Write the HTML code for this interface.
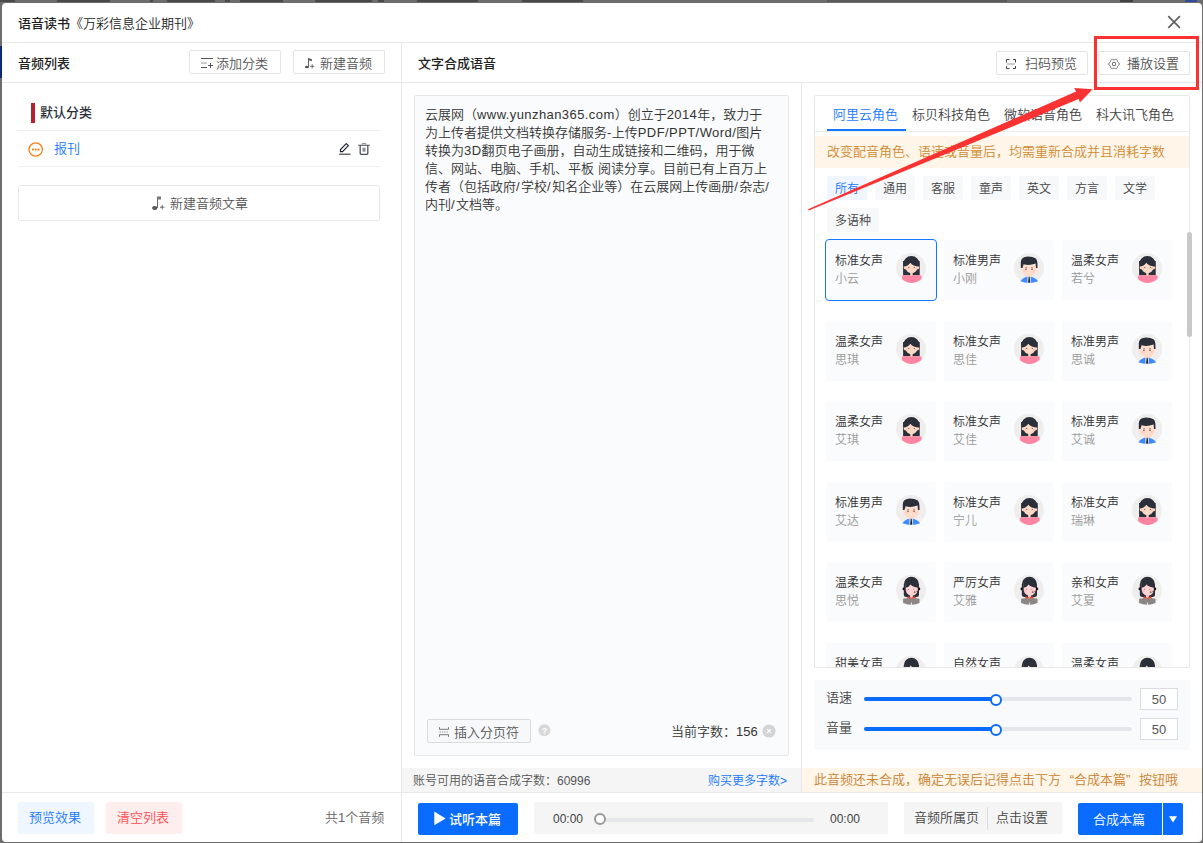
<!DOCTYPE html>
<html lang="zh-CN">
<head>
<meta charset="utf-8">
<title>语音读书</title>
<style>
*{box-sizing:border-box;margin:0;padding:0}
html,body{width:1203px;height:843px;overflow:hidden}
body{font-weight:350;background:#6d6d6d;font-family:"Liberation Sans","Noto Sans CJK SC",sans-serif;font-size:13px;color:#333;position:relative}
.abs{position:absolute}
.t{position:absolute;white-space:nowrap;line-height:20px;height:20px}
.b{font-weight:500}
#navy{left:0;top:46px;width:3px;height:32px;background:#0a2a6e}
.rm{position:absolute;top:0;height:2px;background:#262626;opacity:.5}
#modal{left:2px;top:3px;width:1200px;height:839px;background:#fff;border-radius:4px;overflow:hidden}
.hl{position:absolute;height:1px;background:#e8e8e8}
.vl{position:absolute;width:1px;background:#e8e8e8}
.btn{position:absolute;border:1px solid #e3e3e3;border-radius:2px;background:#fff;color:#555}
.chip{position:absolute;height:24px;line-height:26px;overflow:hidden;border-radius:2px;background:#f7f8fa;color:#444;font-size:12px;text-align:center;top:175px;width:40px}
.card{position:absolute;width:110px;height:60px;background:#fafbfc;border-radius:3px;overflow:hidden}
.card .n1{position:absolute;left:9px;top:12px;line-height:18px;font-size:12px;color:#333;white-space:nowrap}
.card .n2{position:absolute;left:9px;top:30px;line-height:18px;font-size:12px;color:#999;white-space:nowrap}
.card svg{position:absolute;left:69.4px;top:11.5px;width:32px;height:32px}
#ta .la{letter-spacing:.42px}
#L5 .la,#L6 .la{letter-spacing:1.45px!important}
.card.sel{left:825px!important;top:239px!important;width:112px;height:62px;border:1px solid #1677ff;border-radius:4px;background:#fafbfc}
.card.sel .n1{left:9px;top:12px}.card.sel .n2{left:9px;top:30px}.card.sel svg{left:69.4px;top:11.5px}
.q{display:inline-block;width:13px}
</style>
</head>
<body>
<div class="abs" id="navy"></div>
<div class="rm" style="left:0px;width:15px"></div><div class="rm" style="left:57px;width:53px"></div><div class="rm" style="left:150px;width:3px"></div><div class="rm" style="left:167px;width:48px"></div><div class="rm" style="left:225px;width:5px"></div><div class="rm" style="left:240px;width:43px"></div><div class="rm" style="left:315px;width:57px"></div><div class="rm" style="left:378px;width:6px"></div><div class="rm" style="left:417px;width:61px"></div><div class="rm" style="left:522px;width:61px"></div><div class="rm" style="left:827px;width:180px;opacity:.25"></div><div class="rm" style="left:1120px;width:13px;opacity:.6"></div><div class="rm" style="left:1185px;width:12px;background:#1a3fae;opacity:.7"></div>
<div class="abs" id="modal">
<!-- coordinates inside modal are page coords minus (2,3) -->
<div id="in" class="abs" style="left:-2px;top:-3px;width:1203px;height:843px">

<!-- header -->
<div class="t" style="left:18px;top:14px;font-size:13px;color:#222"><span class="b">语音读书</span>《万彩信息企业期刊》</div>
<svg class="abs" style="left:1167px;top:15px" width="15" height="15" viewBox="0 0 15 15"><path d="M1.3 1.2L12.9 12.8M12.9 1.2L1.3 12.8" stroke="#606060" stroke-width="1.7" fill="none"/></svg>
<div class="hl" style="left:2px;top:42px;width:1200px"></div>
<div class="hl" style="left:2px;top:82px;width:1200px"></div>
<div class="vl" style="left:401px;top:43px;height:800px"></div>
<div class="vl" style="left:801px;top:83px;height:710px"></div>
<div class="hl" style="left:2px;top:792px;width:1200px"></div>

<!-- left panel -->
<div class="t b" style="left:18px;top:54px;color:#222">音频列表</div>
<div class="btn" style="left:189px;top:50px;width:92px;height:24px"></div>
<svg class="abs" style="left:200px;top:56px" width="14" height="13" viewBox="0 0 14 13"><path d="M1 2.5H13M1 11.5H7M8 9.5H13M10.5 7V12" stroke="#555" stroke-width="1" fill="none"/><path d="M1 7H7" stroke="#999" stroke-width="1.2" fill="none"/></svg>
<div class="t" style="left:216px;top:54px;color:#555">添加分类</div>
<div class="btn" style="left:293px;top:50px;width:92px;height:24px"></div>
<svg class="abs" style="left:304px;top:57px" width="12" height="12" viewBox="0 0 12 12"><ellipse cx="2.9" cy="10" rx="2" ry="1.35" fill="#555"/><path d="M4.5 10V1.2" stroke="#666" stroke-width="1" fill="none"/><path d="M4.2 1L7.9 2.2V4.2L4.2 3Z" fill="#555"/><path d="M6.2 9.3H10.2M8.2 7.3V11.3" stroke="#666" stroke-width="1" fill="none"/></svg>
<div class="t" style="left:320px;top:54px;color:#555">新建音频</div>

<div class="abs" style="left:31px;top:103px;width:4px;height:20px;background:#b5202e"></div>
<div class="t b" style="left:40px;top:103px;color:#2a2f3a">默认分类</div>
<div class="hl" style="left:18px;top:130px;width:362px;background:#ececec"></div>
<svg class="abs" style="left:28px;top:142px" width="16" height="16" viewBox="0 0 16 16"><circle cx="7.7" cy="7.5" r="6.7" fill="none" stroke="#fa7d14" stroke-width="1.3"/><rect x="4" y="6.6" width="1.9" height="1.8" fill="#fa7d14"/><rect x="6.75" y="6.6" width="1.9" height="1.8" fill="#fa7d14"/><rect x="9.5" y="6.6" width="1.9" height="1.8" fill="#fa7d14"/></svg>
<div class="t" style="left:54px;top:139px;color:#1677ff">报刊</div>
<svg class="abs" style="left:339px;top:142px" width="13" height="14" viewBox="0 0 13 14"><path d="M7.2 1.6L9.4 3.6L3.6 9.6L1.6 9.6L1.4 7.6Z" fill="none" stroke="#1d222d" stroke-width="1.2" stroke-linejoin="round"/><path d="M0.2 12.3H11.6" stroke="#666b75" stroke-width="1.5"/></svg>
<svg class="abs" style="left:358px;top:142px" width="12" height="14" viewBox="0 0 12 14"><path d="M0.3 3.2H11.7" stroke="#3b414c" stroke-width="1.1"/><path d="M4.3 2.6V1.5H7.7V2.6" stroke="#8a8e96" stroke-width="1" fill="none"/><path d="M2.2 3.5V11.6Q2.2 12.4 3 12.4H9Q9.8 12.4 9.8 11.6V3.5" stroke="#4a505b" stroke-width="1.3" fill="none"/><rect x="4.5" y="5.7" width="3" height="4" fill="#8a8e96"/></svg>
<div class="hl" style="left:18px;top:166px;width:362px;background:#f0f0f0"></div>
<div class="btn" style="left:18px;top:185px;width:362px;height:36px;border-color:#e8e8e8"></div>
<svg class="abs" style="left:151px;top:195px" width="14" height="16" viewBox="0 0 14 16"><ellipse cx="3.7" cy="13" rx="2.6" ry="1.9" fill="#555"/><path d="M6.5 13V1.8" stroke="#666" stroke-width="1" fill="none"/><path d="M6 1.5H10V4.5H6Z" fill="#777"/><path d="M9 12.2H13.4M11.2 10V14.4" stroke="#666" stroke-width="1" fill="none"/></svg>
<div class="t" style="left:170px;top:194px;color:#555">新建音频文章</div>

<div class="abs" style="left:18px;top:802px;width:76px;height:32px;border-radius:3px;background:#f0f6ff"></div>
<div class="t" style="left:29px;top:808px;color:#1677ff">预览效果</div>
<div class="abs" style="left:106px;top:802px;width:76px;height:32px;border-radius:3px;background:#ffeeee"></div>
<div class="t" style="left:117px;top:808px;color:#ff4d4f">清空列表</div>
<div class="t" style="left:325px;top:808px;color:#666">共1个音频</div>

<!-- middle panel -->
<div class="t b" style="left:418px;top:54px;color:#222">文字合成语音</div>
<div class="abs" style="left:414px;top:95px;width:375px;height:661px;background:#fafbfc;border:1px solid #e6e6e6;border-radius:2px"></div>
<div class="abs" id="ta" style="left:425px;top:106px;font-size:13px;line-height:18px;color:#333;white-space:nowrap">
<div id="L1">云展网（<span class="la">www.yunzhan365.com</span>）创立于<span class="la">2014</span>年，致力于</div>
<div id="L2">为上传者提供文档转换存储服务<span class="la">-</span>上传<span class="la">PDF/PPT/Word/</span>图片</div>
<div id="L3">转换为<span class="la">3D</span>翻页电子画册，自动生成链接和二维码，用于微</div>
<div id="L4">信、网站、电脑、手机、平板<span class="la"> </span>阅读分享。目前已有上百万上</div>
<div id="L5">传者（包括政府<span class="la">/</span>学校<span class="la">/</span>知名企业等）在云展网上传画册<span class="la">/</span>杂志<span class="la">/</span></div>
<div id="L6">内刊<span class="la">/</span>文档等。</div>
</div>
<div class="abs" style="left:427px;top:719px;width:104px;height:24px;border:1px solid #dcdcdc;border-radius:2px;background:#f7f8fa"></div>
<svg class="abs" style="left:438px;top:726px" width="12" height="12" viewBox="0 0 12 12"><path d="M1.5 1.2V3.3H10.5V1.2M1.5 10.8V8.7H10.5V10.8" stroke="#777" stroke-width="1" fill="none" stroke-linejoin="round"/><path d="M1.5 6H10.5" stroke="#999" stroke-width="1" stroke-dasharray="1.4 0.9" fill="none"/></svg>
<div class="t" style="left:454px;top:723px;color:#555">插入分页符</div>
<svg class="abs" style="left:537.6px;top:723.6px" width="13" height="13" viewBox="0 0 13 13"><circle cx="6.4" cy="6.3" r="6" fill="#d8d8d8"/><text x="6.4" y="9.6" font-size="9" font-weight="bold" fill="#fff" text-anchor="middle" font-family="Liberation Sans,sans-serif">?</text></svg>
<div class="t" style="left:671px;top:722px;color:#333">当前字数：<span class="la">156</span></div>
<svg class="abs" style="left:762px;top:724px" width="14" height="14" viewBox="0 0 14 14"><circle cx="7" cy="7" r="6.6" fill="#d4d4d4"/><path d="M5.1 5.1L8.9 8.9M8.9 5.1L5.1 8.9" stroke="#fff" stroke-width="1.1"/></svg>
<div class="abs" style="left:402px;top:768px;width:399px;height:24px;background:#f5f5f5"></div>
<div class="t" style="left:413px;top:771px;font-size:12px;color:#555">账号可用的语音合成字数：<span class="la">60996</span></div>
<div class="t" style="left:708px;top:771px;font-size:12px;color:#1677ff">购买更多字数&gt;</div>

<div class="abs" style="left:418px;top:803px;width:100px;height:32px;border-radius:2px;background:#0a6cff"></div>
<svg class="abs" style="left:434px;top:811px" width="12" height="15" viewBox="0 0 12 15"><path d="M0.3 0.6L11.6 7.4L0.3 14.2Z" fill="#fff"/></svg>
<div class="t b" style="left:449px;top:810px;color:#fff">试听本篇</div>
<div class="abs" style="left:534px;top:802px;width:354px;height:32px;border-radius:2px;background:#f5f5f5"></div>
<div class="t" style="left:553px;top:809px;font-size:12px;color:#444"><span class="la">00:00</span></div>
<div class="abs" style="left:600px;top:818px;width:214px;height:4px;border-radius:2px;background:#e4e6ea"></div>
<div class="abs" style="left:594px;top:813px;width:12px;height:12px;border-radius:6px;border:2px solid #999;background:#fff"></div>
<div class="t" style="left:830px;top:809px;font-size:12px;color:#444"><span class="la">00:00</span></div>
<div class="abs" style="left:904px;top:802px;width:158px;height:32px;border-radius:2px;background:#f5f5f5"></div>
<div class="t" style="left:914px;top:808px;color:#444">音频所属页</div>
<div class="abs" style="left:987px;top:807px;width:1px;height:23px;background:#dcdcdc"></div>
<div class="t" style="left:996px;top:808px;color:#444">点击设置</div>
<div class="abs" style="left:1078px;top:803px;width:84px;height:32px;border-radius:2px 0 0 2px;background:#0a6cff"></div>
<div class="t" style="left:1093px;top:810px;color:#fff">合成本篇</div>
<div class="abs" style="left:1163px;top:803px;width:20px;height:32px;border-radius:0 2px 2px 0;background:#0a6cff"></div>
<svg class="abs" style="left:1169px;top:816px" width="8" height="7" viewBox="0 0 8 7"><path d="M0 0.3H8L4 6.5Z" fill="#fff"/></svg>

<!--RIGHT-START-->
<!-- right panel -->
<div class="btn" style="left:996px;top:51px;width:92px;height:24px"></div>
<svg class="abs" style="left:1005px;top:58px" width="12" height="12" viewBox="0 0 12 12"><path d="M1.5 4.5V1.5H4.5M8 1.5H10.5V4.5M1.5 8V10.5H4.5M8 10.5H10.5V8" stroke="#444" stroke-width="1" fill="none"/><path d="M2 6H10" stroke="#999" stroke-width="1.2"/></svg>
<div class="t" style="left:1025px;top:54px;color:#555">扫码预览</div>
<div class="btn" style="left:1098px;top:51px;width:92px;height:24px"></div>
<svg class="abs" style="left:1108px;top:58px" width="12" height="12" viewBox="0 0 12 12"><path d="M11.25 6.00L11.20 6.34L11.05 6.66L10.82 6.96L10.54 7.22L10.25 7.44L9.98 7.65L9.76 7.85L9.59 8.07L9.49 8.33L9.42 8.62L9.38 8.96L9.32 9.32L9.24 9.69L9.10 10.04L8.89 10.33L8.62 10.55L8.30 10.67L7.95 10.70L7.58 10.65L7.22 10.54L6.88 10.40L6.56 10.27L6.27 10.18L6.00 10.15L5.73 10.18L5.44 10.27L5.12 10.40L4.78 10.54L4.42 10.65L4.05 10.70L3.70 10.67L3.38 10.55L3.11 10.33L2.90 10.04L2.76 9.69L2.68 9.32L2.62 8.96L2.58 8.62L2.51 8.33L2.41 8.07L2.24 7.85L2.02 7.65L1.75 7.44L1.46 7.22L1.18 6.96L0.95 6.66L0.80 6.34L0.75 6.00L0.80 5.66L0.95 5.34L1.18 5.04L1.46 4.78L1.75 4.56L2.02 4.35L2.24 4.15L2.41 3.93L2.51 3.67L2.58 3.38L2.62 3.04L2.68 2.68L2.76 2.31L2.90 1.96L3.11 1.67L3.37 1.45L3.70 1.33L4.05 1.30L4.42 1.35L4.78 1.46L5.12 1.60L5.44 1.73L5.73 1.82L6.00 1.85L6.27 1.82L6.56 1.73L6.88 1.60L7.22 1.46L7.58 1.35L7.95 1.30L8.30 1.33L8.62 1.45L8.89 1.67L9.10 1.96L9.24 2.31L9.32 2.68L9.38 3.04L9.42 3.38L9.49 3.67L9.59 3.92L9.76 4.15L9.98 4.35L10.25 4.56L10.54 4.78L10.82 5.04L11.05 5.34L11.20 5.66Z" stroke="#666" stroke-width="1" fill="none" stroke-linejoin="round"/><circle cx="6" cy="6" r="1.75" stroke="#666" stroke-width="1" fill="none"/></svg>
<div class="t" style="left:1127px;top:54px;color:#555">播放设置</div>
<div class="abs" style="left:814px;top:95px;width:376px;height:573px;border:1px solid #e8e8e8;border-radius:2px;overflow:hidden" id="vb"><div class="abs" style="left:-815px;top:-96px;width:1203px;height:843px">
<div class="t" style="left:833px;top:105px;color:#1677ff">阿里云角色</div>
<div class="t" style="left:912px;top:105px;color:#444">标贝科技角色</div>
<div class="t" style="left:1004px;top:105px;color:#444">微软语音角色</div>
<div class="t" style="left:1096px;top:105px;color:#444">科大讯飞角色</div>
<div class="hl" style="left:815px;top:131px;width:375px;background:#ececec"></div>
<div class="abs" style="left:827px;top:129px;width:79px;height:2px;background:#1677ff"></div>
<div class="abs" style="left:815px;top:136px;width:375px;height:32px;background:#fff5e9"></div>
<div class="t" style="left:827px;top:142px;color:#d08a2e">改变配音角色、语速或音量后，均需重新合成并且消耗字数</div>
<div class="chip" style="left:827px;top:176px;background:#f0f6ff;color:#1677ff;">所有</div>
<div class="chip" style="left:875px;top:176px;">通用</div>
<div class="chip" style="left:923px;top:176px;">客服</div>
<div class="chip" style="left:971px;top:176px;">童声</div>
<div class="chip" style="left:1019px;top:176px;">英文</div>
<div class="chip" style="left:1067px;top:176px;">方言</div>
<div class="chip" style="left:1115px;top:176px;">文学</div>
<div class="chip" style="left:827px;top:208px;width:52px">多语种</div>
<div class="card sel" style="left:826px;top:240px"><div class="n1">标准女声</div><div class="n2">小云</div><svg viewBox="0 0 32 32"><circle cx="16" cy="16" r="15" fill="#f0eded"/><path d="M8.1 23.2V12.2a8.3 8.2 0 0 1 16.6 0V23.2Z" fill="#2a2f3a"/><rect x="15.3" y="20.6" width="2.3" height="3.8" fill="#ffd3bd"/><path d="M8.4 10.5H24.5V14.4Q24.4 17 22 17.6Q21 20.4 16.5 21.7Q12 20.4 11 17.6Q8.5 17 8.4 14.4Z" fill="#ffd9c7"/><path d="M8.1 14.7Q13.2 14.4 15.3 10.8Q17.6 14.2 24.7 14.7V9H8.1Z" fill="#2a2f3a"/><rect x="13" y="14.9" width="1.5" height="0.8" rx="0.4" fill="#4a3a3a"/><rect x="18.6" y="14.9" width="1.5" height="0.8" rx="0.4" fill="#4a3a3a"/><circle cx="12.3" cy="16.5" r="1" fill="#ffc4b3"/><circle cx="20.9" cy="16.5" r="1" fill="#ffc4b3"/><path d="M7 24.5Q7 23.3 8.2 23.3H15.3Q16.4 24.5 17.6 23.3H25.3Q26.5 23.3 26.5 24.5V27Q21.5 31 16.7 31Q11.5 31 7 27Z" fill="#ff85a3"/></svg></div>
<div class="card" style="left:944px;top:240px"><div class="n1">标准男声</div><div class="n2">小刚</div><svg viewBox="0 0 32 32"><circle cx="16" cy="16" r="15" fill="#f0eded"/><path d="M7.4 29.2Q11 24.6 16 24.3Q21 24.6 25.2 29.2Q21 31 16.3 31Q11.5 31 7.4 29.2Z" fill="#3d8bff"/><rect x="14.5" y="23" width="3.2" height="8" fill="#fff"/><rect x="14.5" y="22" width="3.2" height="3" fill="#ffd3bd"/><path d="M15.6 24.8h1.1l0.5 6h-2.1z" fill="#222"/><path d="M8.7 13H23.7V17.2Q23.7 21 20.6 23.2Q16.2 25.4 12 23.2Q8.7 21 8.7 17.2Z" fill="#ffdccb"/><path d="M7.8 16V10Q8 4.6 15 4.4Q20 4.4 22.8 6.6Q24.8 8.4 24.5 16L23 16L22.6 11.6Q16 14 10.6 12.2L9.5 16Z" fill="#2a2f3a"/><circle cx="13" cy="17.2" r="0.7" fill="#3a3038"/><circle cx="19" cy="17.2" r="0.7" fill="#3a3038"/><path d="M12 15.8L14 15.4M18 15.4L20 15.8" stroke="#5a4a4a" stroke-width="0.5"/><circle cx="11.4" cy="18.8" r="1" fill="#ffc9b8"/><circle cx="20.8" cy="18.8" r="1" fill="#ffc9b8"/></svg></div>
<div class="card" style="left:1062px;top:240px"><div class="n1">温柔女声</div><div class="n2">若兮</div><svg viewBox="0 0 32 32"><circle cx="16" cy="16" r="15" fill="#f0eded"/><path d="M8.1 23.2V12.2a8.3 8.2 0 0 1 16.6 0V23.2Z" fill="#2a2f3a"/><rect x="15.3" y="20.6" width="2.3" height="3.8" fill="#ffd3bd"/><path d="M8.4 10.5H24.5V14.4Q24.4 17 22 17.6Q21 20.4 16.5 21.7Q12 20.4 11 17.6Q8.5 17 8.4 14.4Z" fill="#ffd9c7"/><path d="M8.1 14.7Q13.2 14.4 15.3 10.8Q17.6 14.2 24.7 14.7V9H8.1Z" fill="#2a2f3a"/><rect x="13" y="14.9" width="1.5" height="0.8" rx="0.4" fill="#4a3a3a"/><rect x="18.6" y="14.9" width="1.5" height="0.8" rx="0.4" fill="#4a3a3a"/><circle cx="12.3" cy="16.5" r="1" fill="#ffc4b3"/><circle cx="20.9" cy="16.5" r="1" fill="#ffc4b3"/><path d="M7 24.5Q7 23.3 8.2 23.3H15.3Q16.4 24.5 17.6 23.3H25.3Q26.5 23.3 26.5 24.5V27Q21.5 31 16.7 31Q11.5 31 7 27Z" fill="#ff85a3"/></svg></div>
<div class="card" style="left:826px;top:321px"><div class="n1">温柔女声</div><div class="n2">思琪</div><svg viewBox="0 0 32 32"><circle cx="16" cy="16" r="15" fill="#f0eded"/><path d="M8.1 23.2V12.2a8.3 8.2 0 0 1 16.6 0V23.2Z" fill="#2a2f3a"/><rect x="15.3" y="20.6" width="2.3" height="3.8" fill="#ffd3bd"/><path d="M8.4 10.5H24.5V14.4Q24.4 17 22 17.6Q21 20.4 16.5 21.7Q12 20.4 11 17.6Q8.5 17 8.4 14.4Z" fill="#ffd9c7"/><path d="M8.1 14.7Q13.2 14.4 15.3 10.8Q17.6 14.2 24.7 14.7V9H8.1Z" fill="#2a2f3a"/><rect x="13" y="14.9" width="1.5" height="0.8" rx="0.4" fill="#4a3a3a"/><rect x="18.6" y="14.9" width="1.5" height="0.8" rx="0.4" fill="#4a3a3a"/><circle cx="12.3" cy="16.5" r="1" fill="#ffc4b3"/><circle cx="20.9" cy="16.5" r="1" fill="#ffc4b3"/><path d="M7 24.5Q7 23.3 8.2 23.3H15.3Q16.4 24.5 17.6 23.3H25.3Q26.5 23.3 26.5 24.5V27Q21.5 31 16.7 31Q11.5 31 7 27Z" fill="#ff85a3"/></svg></div>
<div class="card" style="left:944px;top:321px"><div class="n1">标准女声</div><div class="n2">思佳</div><svg viewBox="0 0 32 32"><circle cx="16" cy="16" r="15" fill="#f0eded"/><path d="M8.1 23.2V12.2a8.3 8.2 0 0 1 16.6 0V23.2Z" fill="#2a2f3a"/><rect x="15.3" y="20.6" width="2.3" height="3.8" fill="#ffd3bd"/><path d="M8.4 10.5H24.5V14.4Q24.4 17 22 17.6Q21 20.4 16.5 21.7Q12 20.4 11 17.6Q8.5 17 8.4 14.4Z" fill="#ffd9c7"/><path d="M8.1 14.7Q13.2 14.4 15.3 10.8Q17.6 14.2 24.7 14.7V9H8.1Z" fill="#2a2f3a"/><rect x="13" y="14.9" width="1.5" height="0.8" rx="0.4" fill="#4a3a3a"/><rect x="18.6" y="14.9" width="1.5" height="0.8" rx="0.4" fill="#4a3a3a"/><circle cx="12.3" cy="16.5" r="1" fill="#ffc4b3"/><circle cx="20.9" cy="16.5" r="1" fill="#ffc4b3"/><path d="M7 24.5Q7 23.3 8.2 23.3H15.3Q16.4 24.5 17.6 23.3H25.3Q26.5 23.3 26.5 24.5V27Q21.5 31 16.7 31Q11.5 31 7 27Z" fill="#ff85a3"/></svg></div>
<div class="card" style="left:1062px;top:321px"><div class="n1">标准男声</div><div class="n2">思诚</div><svg viewBox="0 0 32 32"><circle cx="16" cy="16" r="15" fill="#f0eded"/><path d="M7.4 29.2Q11 24.6 16 24.3Q21 24.6 25.2 29.2Q21 31 16.3 31Q11.5 31 7.4 29.2Z" fill="#3d8bff"/><rect x="14.5" y="23" width="3.2" height="8" fill="#fff"/><rect x="14.5" y="22" width="3.2" height="3" fill="#ffd3bd"/><path d="M15.6 24.8h1.1l0.5 6h-2.1z" fill="#222"/><path d="M8.7 13H23.7V17.2Q23.7 21 20.6 23.2Q16.2 25.4 12 23.2Q8.7 21 8.7 17.2Z" fill="#ffdccb"/><path d="M7.8 16V10Q8 4.6 15 4.4Q20 4.4 22.8 6.6Q24.8 8.4 24.5 16L23 16L22.6 11.6Q16 14 10.6 12.2L9.5 16Z" fill="#2a2f3a"/><circle cx="13" cy="17.2" r="0.7" fill="#3a3038"/><circle cx="19" cy="17.2" r="0.7" fill="#3a3038"/><path d="M12 15.8L14 15.4M18 15.4L20 15.8" stroke="#5a4a4a" stroke-width="0.5"/><circle cx="11.4" cy="18.8" r="1" fill="#ffc9b8"/><circle cx="20.8" cy="18.8" r="1" fill="#ffc9b8"/></svg></div>
<div class="card" style="left:826px;top:401px"><div class="n1">温柔女声</div><div class="n2">艾琪</div><svg viewBox="0 0 32 32"><circle cx="16" cy="16" r="15" fill="#f0eded"/><path d="M8.1 23.2V12.2a8.3 8.2 0 0 1 16.6 0V23.2Z" fill="#2a2f3a"/><rect x="15.3" y="20.6" width="2.3" height="3.8" fill="#ffd3bd"/><path d="M8.4 10.5H24.5V14.4Q24.4 17 22 17.6Q21 20.4 16.5 21.7Q12 20.4 11 17.6Q8.5 17 8.4 14.4Z" fill="#ffd9c7"/><path d="M8.1 14.7Q13.2 14.4 15.3 10.8Q17.6 14.2 24.7 14.7V9H8.1Z" fill="#2a2f3a"/><rect x="13" y="14.9" width="1.5" height="0.8" rx="0.4" fill="#4a3a3a"/><rect x="18.6" y="14.9" width="1.5" height="0.8" rx="0.4" fill="#4a3a3a"/><circle cx="12.3" cy="16.5" r="1" fill="#ffc4b3"/><circle cx="20.9" cy="16.5" r="1" fill="#ffc4b3"/><path d="M7 24.5Q7 23.3 8.2 23.3H15.3Q16.4 24.5 17.6 23.3H25.3Q26.5 23.3 26.5 24.5V27Q21.5 31 16.7 31Q11.5 31 7 27Z" fill="#ff85a3"/></svg></div>
<div class="card" style="left:944px;top:401px"><div class="n1">标准女声</div><div class="n2">艾佳</div><svg viewBox="0 0 32 32"><circle cx="16" cy="16" r="15" fill="#f0eded"/><path d="M8.1 23.2V12.2a8.3 8.2 0 0 1 16.6 0V23.2Z" fill="#2a2f3a"/><rect x="15.3" y="20.6" width="2.3" height="3.8" fill="#ffd3bd"/><path d="M8.4 10.5H24.5V14.4Q24.4 17 22 17.6Q21 20.4 16.5 21.7Q12 20.4 11 17.6Q8.5 17 8.4 14.4Z" fill="#ffd9c7"/><path d="M8.1 14.7Q13.2 14.4 15.3 10.8Q17.6 14.2 24.7 14.7V9H8.1Z" fill="#2a2f3a"/><rect x="13" y="14.9" width="1.5" height="0.8" rx="0.4" fill="#4a3a3a"/><rect x="18.6" y="14.9" width="1.5" height="0.8" rx="0.4" fill="#4a3a3a"/><circle cx="12.3" cy="16.5" r="1" fill="#ffc4b3"/><circle cx="20.9" cy="16.5" r="1" fill="#ffc4b3"/><path d="M7 24.5Q7 23.3 8.2 23.3H15.3Q16.4 24.5 17.6 23.3H25.3Q26.5 23.3 26.5 24.5V27Q21.5 31 16.7 31Q11.5 31 7 27Z" fill="#ff85a3"/></svg></div>
<div class="card" style="left:1062px;top:401px"><div class="n1">标准男声</div><div class="n2">艾诚</div><svg viewBox="0 0 32 32"><circle cx="16" cy="16" r="15" fill="#f0eded"/><path d="M7.4 29.2Q11 24.6 16 24.3Q21 24.6 25.2 29.2Q21 31 16.3 31Q11.5 31 7.4 29.2Z" fill="#3d8bff"/><rect x="14.5" y="23" width="3.2" height="8" fill="#fff"/><rect x="14.5" y="22" width="3.2" height="3" fill="#ffd3bd"/><path d="M15.6 24.8h1.1l0.5 6h-2.1z" fill="#222"/><path d="M8.7 13H23.7V17.2Q23.7 21 20.6 23.2Q16.2 25.4 12 23.2Q8.7 21 8.7 17.2Z" fill="#ffdccb"/><path d="M7.8 16V10Q8 4.6 15 4.4Q20 4.4 22.8 6.6Q24.8 8.4 24.5 16L23 16L22.6 11.6Q16 14 10.6 12.2L9.5 16Z" fill="#2a2f3a"/><circle cx="13" cy="17.2" r="0.7" fill="#3a3038"/><circle cx="19" cy="17.2" r="0.7" fill="#3a3038"/><path d="M12 15.8L14 15.4M18 15.4L20 15.8" stroke="#5a4a4a" stroke-width="0.5"/><circle cx="11.4" cy="18.8" r="1" fill="#ffc9b8"/><circle cx="20.8" cy="18.8" r="1" fill="#ffc9b8"/></svg></div>
<div class="card" style="left:826px;top:482px"><div class="n1">标准男声</div><div class="n2">艾达</div><svg viewBox="0 0 32 32"><circle cx="16" cy="16" r="15" fill="#f0eded"/><path d="M7.4 29.2Q11 24.6 16 24.3Q21 24.6 25.2 29.2Q21 31 16.3 31Q11.5 31 7.4 29.2Z" fill="#3d8bff"/><rect x="14.5" y="23" width="3.2" height="8" fill="#fff"/><rect x="14.5" y="22" width="3.2" height="3" fill="#ffd3bd"/><path d="M15.6 24.8h1.1l0.5 6h-2.1z" fill="#222"/><path d="M8.7 13H23.7V17.2Q23.7 21 20.6 23.2Q16.2 25.4 12 23.2Q8.7 21 8.7 17.2Z" fill="#ffdccb"/><path d="M7.8 16V10Q8 4.6 15 4.4Q20 4.4 22.8 6.6Q24.8 8.4 24.5 16L23 16L22.6 11.6Q16 14 10.6 12.2L9.5 16Z" fill="#2a2f3a"/><circle cx="13" cy="17.2" r="0.7" fill="#3a3038"/><circle cx="19" cy="17.2" r="0.7" fill="#3a3038"/><path d="M12 15.8L14 15.4M18 15.4L20 15.8" stroke="#5a4a4a" stroke-width="0.5"/><circle cx="11.4" cy="18.8" r="1" fill="#ffc9b8"/><circle cx="20.8" cy="18.8" r="1" fill="#ffc9b8"/></svg></div>
<div class="card" style="left:944px;top:482px"><div class="n1">标准女声</div><div class="n2">宁儿</div><svg viewBox="0 0 32 32"><circle cx="16" cy="16" r="15" fill="#f0eded"/><path d="M8.1 23.2V12.2a8.3 8.2 0 0 1 16.6 0V23.2Z" fill="#2a2f3a"/><rect x="15.3" y="20.6" width="2.3" height="3.8" fill="#ffd3bd"/><path d="M8.4 10.5H24.5V14.4Q24.4 17 22 17.6Q21 20.4 16.5 21.7Q12 20.4 11 17.6Q8.5 17 8.4 14.4Z" fill="#ffd9c7"/><path d="M8.1 14.7Q13.2 14.4 15.3 10.8Q17.6 14.2 24.7 14.7V9H8.1Z" fill="#2a2f3a"/><rect x="13" y="14.9" width="1.5" height="0.8" rx="0.4" fill="#4a3a3a"/><rect x="18.6" y="14.9" width="1.5" height="0.8" rx="0.4" fill="#4a3a3a"/><circle cx="12.3" cy="16.5" r="1" fill="#ffc4b3"/><circle cx="20.9" cy="16.5" r="1" fill="#ffc4b3"/><path d="M7 24.5Q7 23.3 8.2 23.3H15.3Q16.4 24.5 17.6 23.3H25.3Q26.5 23.3 26.5 24.5V27Q21.5 31 16.7 31Q11.5 31 7 27Z" fill="#ff85a3"/></svg></div>
<div class="card" style="left:1062px;top:482px"><div class="n1">标准女声</div><div class="n2">瑞琳</div><svg viewBox="0 0 32 32"><circle cx="16" cy="16" r="15" fill="#f0eded"/><path d="M8.1 23.2V12.2a8.3 8.2 0 0 1 16.6 0V23.2Z" fill="#2a2f3a"/><rect x="15.3" y="20.6" width="2.3" height="3.8" fill="#ffd3bd"/><path d="M8.4 10.5H24.5V14.4Q24.4 17 22 17.6Q21 20.4 16.5 21.7Q12 20.4 11 17.6Q8.5 17 8.4 14.4Z" fill="#ffd9c7"/><path d="M8.1 14.7Q13.2 14.4 15.3 10.8Q17.6 14.2 24.7 14.7V9H8.1Z" fill="#2a2f3a"/><rect x="13" y="14.9" width="1.5" height="0.8" rx="0.4" fill="#4a3a3a"/><rect x="18.6" y="14.9" width="1.5" height="0.8" rx="0.4" fill="#4a3a3a"/><circle cx="12.3" cy="16.5" r="1" fill="#ffc4b3"/><circle cx="20.9" cy="16.5" r="1" fill="#ffc4b3"/><path d="M7 24.5Q7 23.3 8.2 23.3H15.3Q16.4 24.5 17.6 23.3H25.3Q26.5 23.3 26.5 24.5V27Q21.5 31 16.7 31Q11.5 31 7 27Z" fill="#ff85a3"/></svg></div>
<div class="card" style="left:826px;top:562px"><div class="n1">温柔女声</div><div class="n2">思悦</div><svg viewBox="0 0 32 32"><circle cx="16" cy="16" r="15" fill="#f0eded"/><path d="M8.8 21V10.4a7.6 7.6 0 0 1 15.2 0V21Q24 23 21.4 23H11.4Q8.8 23 8.8 21Z" fill="#2a2f3a"/><path d="M10.7 9H22.8V16Q22.6 19.4 19.8 21Q16.8 22.4 13.8 21Q11 19.4 10.7 16Z" fill="#ffd3d3"/><path d="M10.4 13.8Q14.2 13.2 15.6 10.6Q17.6 13.2 23 13.8V8H10.4Z" fill="#2a2f3a"/><rect x="15.1" y="20.6" width="2.7" height="3" fill="#ffd3d3"/><path d="M11.2 24.8L13.4 22.2L16.4 23.7L19.4 22.2L21.8 24.8Z" fill="#e8432e"/><path d="M8.1 25.4Q8.1 24.4 9.1 24.4H23.5Q24.5 24.4 24.5 25.4V29Q21 30.8 16.9 30.8V28.6H15.9V30.8Q12 30.8 8.1 29Z" fill="#8a8685"/><rect x="7.6" y="13.6" width="1.9" height="2.6" rx="0.9" fill="#111"/><rect x="23.3" y="13.6" width="1.9" height="2.6" rx="0.9" fill="#111"/><path d="M24 16.4Q23.4 17.6 20.4 17.9" stroke="#111" stroke-width="0.5" fill="none"/><ellipse cx="19.6" cy="18" rx="0.9" ry="0.6" fill="#111"/><circle cx="13.6" cy="15.3" r="0.55" fill="#778"/><circle cx="18.8" cy="15.3" r="0.55" fill="#778"/><circle cx="12.4" cy="16.8" r="1" fill="#ffb9c0"/><circle cx="20.6" cy="16.8" r="1" fill="#ffb9c0"/></svg></div>
<div class="card" style="left:944px;top:562px"><div class="n1">严厉女声</div><div class="n2">艾雅</div><svg viewBox="0 0 32 32"><circle cx="16" cy="16" r="15" fill="#f0eded"/><path d="M8.8 21V10.4a7.6 7.6 0 0 1 15.2 0V21Q24 23 21.4 23H11.4Q8.8 23 8.8 21Z" fill="#2a2f3a"/><path d="M10.7 9H22.8V16Q22.6 19.4 19.8 21Q16.8 22.4 13.8 21Q11 19.4 10.7 16Z" fill="#ffd3d3"/><path d="M10.4 13.8Q14.2 13.2 15.6 10.6Q17.6 13.2 23 13.8V8H10.4Z" fill="#2a2f3a"/><rect x="15.1" y="20.6" width="2.7" height="3" fill="#ffd3d3"/><path d="M11.2 24.8L13.4 22.2L16.4 23.7L19.4 22.2L21.8 24.8Z" fill="#e8432e"/><path d="M8.1 25.4Q8.1 24.4 9.1 24.4H23.5Q24.5 24.4 24.5 25.4V29Q21 30.8 16.9 30.8V28.6H15.9V30.8Q12 30.8 8.1 29Z" fill="#8a8685"/><rect x="7.6" y="13.6" width="1.9" height="2.6" rx="0.9" fill="#111"/><rect x="23.3" y="13.6" width="1.9" height="2.6" rx="0.9" fill="#111"/><path d="M24 16.4Q23.4 17.6 20.4 17.9" stroke="#111" stroke-width="0.5" fill="none"/><ellipse cx="19.6" cy="18" rx="0.9" ry="0.6" fill="#111"/><circle cx="13.6" cy="15.3" r="0.55" fill="#778"/><circle cx="18.8" cy="15.3" r="0.55" fill="#778"/><circle cx="12.4" cy="16.8" r="1" fill="#ffb9c0"/><circle cx="20.6" cy="16.8" r="1" fill="#ffb9c0"/></svg></div>
<div class="card" style="left:1062px;top:562px"><div class="n1">亲和女声</div><div class="n2">艾夏</div><svg viewBox="0 0 32 32"><circle cx="16" cy="16" r="15" fill="#f0eded"/><path d="M8.8 21V10.4a7.6 7.6 0 0 1 15.2 0V21Q24 23 21.4 23H11.4Q8.8 23 8.8 21Z" fill="#2a2f3a"/><path d="M10.7 9H22.8V16Q22.6 19.4 19.8 21Q16.8 22.4 13.8 21Q11 19.4 10.7 16Z" fill="#ffd3d3"/><path d="M10.4 13.8Q14.2 13.2 15.6 10.6Q17.6 13.2 23 13.8V8H10.4Z" fill="#2a2f3a"/><rect x="15.1" y="20.6" width="2.7" height="3" fill="#ffd3d3"/><path d="M11.2 24.8L13.4 22.2L16.4 23.7L19.4 22.2L21.8 24.8Z" fill="#e8432e"/><path d="M8.1 25.4Q8.1 24.4 9.1 24.4H23.5Q24.5 24.4 24.5 25.4V29Q21 30.8 16.9 30.8V28.6H15.9V30.8Q12 30.8 8.1 29Z" fill="#8a8685"/><rect x="7.6" y="13.6" width="1.9" height="2.6" rx="0.9" fill="#111"/><rect x="23.3" y="13.6" width="1.9" height="2.6" rx="0.9" fill="#111"/><path d="M24 16.4Q23.4 17.6 20.4 17.9" stroke="#111" stroke-width="0.5" fill="none"/><ellipse cx="19.6" cy="18" rx="0.9" ry="0.6" fill="#111"/><circle cx="13.6" cy="15.3" r="0.55" fill="#778"/><circle cx="18.8" cy="15.3" r="0.55" fill="#778"/><circle cx="12.4" cy="16.8" r="1" fill="#ffb9c0"/><circle cx="20.6" cy="16.8" r="1" fill="#ffb9c0"/></svg></div>
<div class="card" style="left:826px;top:643px"><div class="n1">甜美女声</div><div class="n2">思婧</div><svg viewBox="0 0 32 32"><circle cx="16" cy="16" r="15" fill="#f0eded"/><path d="M8.8 21V10.4a7.6 7.6 0 0 1 15.2 0V21Q24 23 21.4 23H11.4Q8.8 23 8.8 21Z" fill="#2a2f3a"/><path d="M10.7 9H22.8V16Q22.6 19.4 19.8 21Q16.8 22.4 13.8 21Q11 19.4 10.7 16Z" fill="#ffd3d3"/><path d="M10.4 13.8Q14.2 13.2 15.6 10.6Q17.6 13.2 23 13.8V8H10.4Z" fill="#2a2f3a"/><rect x="15.1" y="20.6" width="2.7" height="3" fill="#ffd3d3"/><path d="M11.2 24.8L13.4 22.2L16.4 23.7L19.4 22.2L21.8 24.8Z" fill="#e8432e"/><path d="M8.1 25.4Q8.1 24.4 9.1 24.4H23.5Q24.5 24.4 24.5 25.4V29Q21 30.8 16.9 30.8V28.6H15.9V30.8Q12 30.8 8.1 29Z" fill="#8a8685"/><rect x="7.6" y="13.6" width="1.9" height="2.6" rx="0.9" fill="#111"/><rect x="23.3" y="13.6" width="1.9" height="2.6" rx="0.9" fill="#111"/><path d="M24 16.4Q23.4 17.6 20.4 17.9" stroke="#111" stroke-width="0.5" fill="none"/><ellipse cx="19.6" cy="18" rx="0.9" ry="0.6" fill="#111"/><circle cx="13.6" cy="15.3" r="0.55" fill="#778"/><circle cx="18.8" cy="15.3" r="0.55" fill="#778"/><circle cx="12.4" cy="16.8" r="1" fill="#ffb9c0"/><circle cx="20.6" cy="16.8" r="1" fill="#ffb9c0"/></svg></div>
<div class="card" style="left:944px;top:643px"><div class="n1">自然女声</div><div class="n2">思彤</div><svg viewBox="0 0 32 32"><circle cx="16" cy="16" r="15" fill="#f0eded"/><path d="M8.8 21V10.4a7.6 7.6 0 0 1 15.2 0V21Q24 23 21.4 23H11.4Q8.8 23 8.8 21Z" fill="#2a2f3a"/><path d="M10.7 9H22.8V16Q22.6 19.4 19.8 21Q16.8 22.4 13.8 21Q11 19.4 10.7 16Z" fill="#ffd3d3"/><path d="M10.4 13.8Q14.2 13.2 15.6 10.6Q17.6 13.2 23 13.8V8H10.4Z" fill="#2a2f3a"/><rect x="15.1" y="20.6" width="2.7" height="3" fill="#ffd3d3"/><path d="M11.2 24.8L13.4 22.2L16.4 23.7L19.4 22.2L21.8 24.8Z" fill="#e8432e"/><path d="M8.1 25.4Q8.1 24.4 9.1 24.4H23.5Q24.5 24.4 24.5 25.4V29Q21 30.8 16.9 30.8V28.6H15.9V30.8Q12 30.8 8.1 29Z" fill="#8a8685"/><rect x="7.6" y="13.6" width="1.9" height="2.6" rx="0.9" fill="#111"/><rect x="23.3" y="13.6" width="1.9" height="2.6" rx="0.9" fill="#111"/><path d="M24 16.4Q23.4 17.6 20.4 17.9" stroke="#111" stroke-width="0.5" fill="none"/><ellipse cx="19.6" cy="18" rx="0.9" ry="0.6" fill="#111"/><circle cx="13.6" cy="15.3" r="0.55" fill="#778"/><circle cx="18.8" cy="15.3" r="0.55" fill="#778"/><circle cx="12.4" cy="16.8" r="1" fill="#ffb9c0"/><circle cx="20.6" cy="16.8" r="1" fill="#ffb9c0"/></svg></div>
<div class="card" style="left:1062px;top:643px"><div class="n1">温柔女声</div><div class="n2">艾彤</div><svg viewBox="0 0 32 32"><circle cx="16" cy="16" r="15" fill="#f0eded"/><path d="M8.8 21V10.4a7.6 7.6 0 0 1 15.2 0V21Q24 23 21.4 23H11.4Q8.8 23 8.8 21Z" fill="#2a2f3a"/><path d="M10.7 9H22.8V16Q22.6 19.4 19.8 21Q16.8 22.4 13.8 21Q11 19.4 10.7 16Z" fill="#ffd3d3"/><path d="M10.4 13.8Q14.2 13.2 15.6 10.6Q17.6 13.2 23 13.8V8H10.4Z" fill="#2a2f3a"/><rect x="15.1" y="20.6" width="2.7" height="3" fill="#ffd3d3"/><path d="M11.2 24.8L13.4 22.2L16.4 23.7L19.4 22.2L21.8 24.8Z" fill="#e8432e"/><path d="M8.1 25.4Q8.1 24.4 9.1 24.4H23.5Q24.5 24.4 24.5 25.4V29Q21 30.8 16.9 30.8V28.6H15.9V30.8Q12 30.8 8.1 29Z" fill="#8a8685"/><rect x="7.6" y="13.6" width="1.9" height="2.6" rx="0.9" fill="#111"/><rect x="23.3" y="13.6" width="1.9" height="2.6" rx="0.9" fill="#111"/><path d="M24 16.4Q23.4 17.6 20.4 17.9" stroke="#111" stroke-width="0.5" fill="none"/><ellipse cx="19.6" cy="18" rx="0.9" ry="0.6" fill="#111"/><circle cx="13.6" cy="15.3" r="0.55" fill="#778"/><circle cx="18.8" cy="15.3" r="0.55" fill="#778"/><circle cx="12.4" cy="16.8" r="1" fill="#ffb9c0"/><circle cx="20.6" cy="16.8" r="1" fill="#ffb9c0"/></svg></div>
</div></div>
<div class="abs" style="left:1187px;top:232px;width:5px;height:105px;border-radius:3px;background:#c8c8c8"></div>
<div class="abs" style="left:814px;top:680px;width:376px;height:70px;background:#f9fafc;border-radius:2px"></div>
<div class="t" style="left:826px;top:688px;color:#444">语速</div>
<div class="abs" style="left:864px;top:697px;width:268px;height:4px;border-radius:2px;background:#e4e6ec"></div>
<div class="abs" style="left:864px;top:697px;width:132px;height:4px;border-radius:2px;background:#0a6cff"></div>
<div class="abs" style="left:990px;top:694px;width:12px;height:12px;border-radius:6px;border:2px solid #0a6cff;background:#fff"></div>
<div class="abs" style="left:1140px;top:688px;width:38px;height:22px;border:1px solid #d9dce3;background:#fff;text-align:center;line-height:22px;font-size:13px;color:#555">50</div>
<div class="t" style="left:826px;top:718px;color:#444">音量</div>
<div class="abs" style="left:864px;top:727px;width:268px;height:4px;border-radius:2px;background:#e4e6ec"></div>
<div class="abs" style="left:864px;top:727px;width:132px;height:4px;border-radius:2px;background:#0a6cff"></div>
<div class="abs" style="left:990px;top:724px;width:12px;height:12px;border-radius:6px;border:2px solid #0a6cff;background:#fff"></div>
<div class="abs" style="left:1140px;top:718px;width:38px;height:22px;border:1px solid #d9dce3;background:#fff;text-align:center;line-height:22px;font-size:13px;color:#555">50</div>
<div class="abs" style="left:802px;top:768px;width:401px;height:24px;background:#fff5e9"></div>
<div class="t" style="left:814px;top:770px;color:#c8822e">此音频还未合成，确定无误后记得点击下方<span class="q" style="text-align:right">“</span>合成本篇<span class="q" style="text-align:left">”</span>按钮哦</div>
<svg class="abs" style="left:0;top:0" width="1203" height="843" viewBox="0 0 1203 843"><rect x="1095.5" y="37.5" width="102" height="51" fill="none" stroke="#fb3232" stroke-width="3"/><path d="M808 209.2L1076.1 91.6L1074.2 87.9L1092.6 89.3L1079.9 102.4L1078.7 99.1L808.8 210.6Z" fill="#fb3232"/></svg>
<!--RIGHT-END-->
</div>
</div>
</body>
</html>
